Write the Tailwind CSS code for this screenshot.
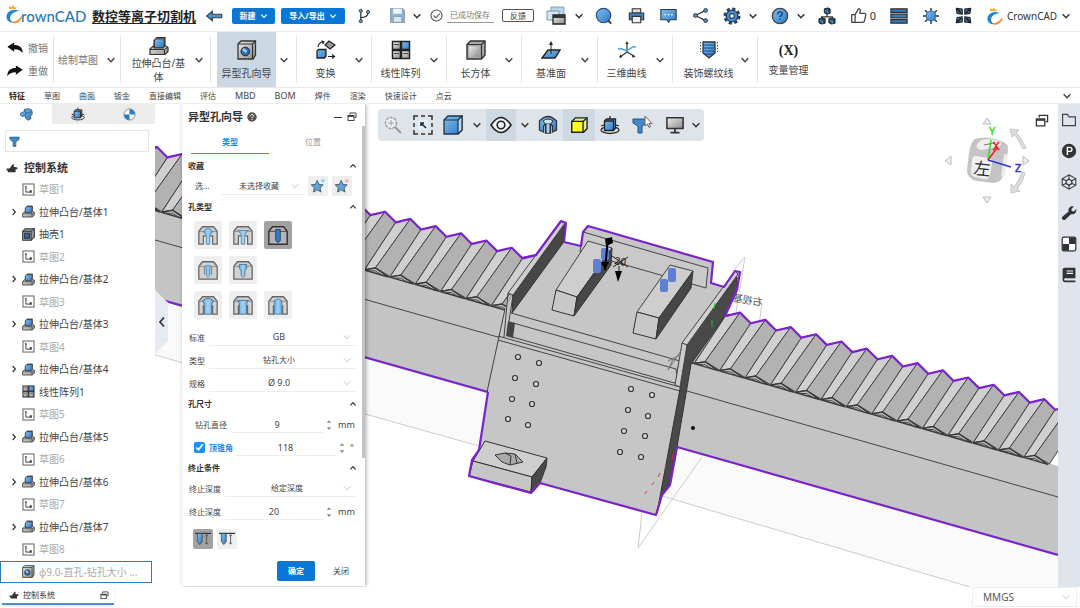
<!DOCTYPE html>
<html lang="zh-CN">
<head>
    <meta charset="utf-8"/>
    <meta content="width=device-width, initial-scale=1.0" name="viewport"/>
    <title>CrownCAD</title>
    <script src="https://cdn.jsdelivr.net/npm/@tailwindcss/browser@4"></script>
</head>
<body class="h-screen flex flex-col overflow-hidden bg-white text-[#444] text-[10px] leading-[14px] font-['Noto_Sans','Noto_Sans_CJK_SC',sans-serif]">
    <!-- Icon symbols -->
    <svg class="absolute w-0 h-0" aria-hidden="true">
        <defs>
            <linearGradient id="blue" x1="0" y1="0" x2="1" y2="1"><stop offset="0" stop-color="#7fc0f2"/><stop offset="1" stop-color="#2f78c4"/></linearGradient>
            <linearGradient id="pale" x1="0" y1="0" x2="1" y2="0"><stop offset="0" stop-color="#5fa6dc"/><stop offset="0.5" stop-color="#a6d3f3"/><stop offset="1" stop-color="#5fa6dc"/></linearGradient>
            <linearGradient id="gray" x1="0" y1="0" x2="1" y2="1"><stop offset="0" stop-color="#eee"/><stop offset="1" stop-color="#8a8a8a"/></linearGradient>
        </defs>
        <symbol id="chev" viewBox="0 0 12 12"><path d="M2 4l4 4 4-4" fill="none" stroke="currentColor" stroke-width="1.800"/></symbol>
        <symbol id="chev-up" viewBox="0 0 12 12"><path d="M2 8l4-4 4 4" fill="none" stroke="currentColor" stroke-width="1.800"/></symbol>
        <symbol id="chev-right" viewBox="0 0 12 12"><path d="M4 1.500l4 4.500-4 4.500" fill="none" stroke="currentColor" stroke-width="1.800"/></symbol>
        <symbol id="chev-thin" viewBox="0 0 12 12"><path d="M1 3.500l5 5 5-5" fill="none" stroke="#bbb" stroke-width="1.300"/></symbol>
        <symbol id="spin" viewBox="0 0 8 16"><path d="M1 5l3-3.500 3 3.500zM1 11l3 3.500 3-3.500z" fill="#888"/></symbol>
        <symbol id="crown" viewBox="1 0 18 20">
            <path d="M15 6.500C8 3.500 1.500 7.500 1.500 13c0 4 3.500 6.800 7.500 6C6 17.500 4.500 15 5.800 12c1-2.700 4.200-4.700 9.200-5.500z" fill="#1b86d3"/>
            <path d="M18 12.500c-1 5-6 8-10.500 6.300 4.500 0 7.500-2.500 10.500-6.300z" fill="#f08a1c" stroke="#f08a1c"/>
            <path d="M4 5L4.500 1.500 7 3l1.500-2.500L10 3l2.500-.5L11 5C8.500 4 6.500 4.200 4 5z" fill="#f5a623"/>
        </symbol>
        <symbol id="back" viewBox="0 0 20 14"><path d="M1.500 7L8 1.500V5h11v4H8v3.500z" fill="#4d92cf" stroke="#33404d" stroke-width="1.300"/></symbol>
        <symbol id="branch" viewBox="0 0 20 20"><path d="M6 4v13M6 12c7 0 9-2 9-6" fill="none" stroke="#333" stroke-width="1.600"/><g fill="#5a9ad4" stroke="#333"><circle cx="6" cy="3.500" r="2"/><circle cx="6" cy="16.500" r="2"/><circle cx="15" cy="5" r="2"/></g></symbol>
        <symbol id="save" viewBox="0 0 20 20"><path d="M2 2h14l2 2v14H2z" fill="#8fb8d8" stroke="#8293a2" stroke-width="1.300"/><path d="M5 2h10v6H5z" fill="#eef4f8"/><path d="M5 11h10v7H5z" fill="#dbe8f1" stroke="#8293a2"/></symbol>
        <symbol id="check" viewBox="0 0 20 20"><circle cx="10" cy="10" r="8.500" fill="none" stroke="#555" stroke-width="1.700"/><path d="M5.500 10l3.500 3.500 6-6.500" fill="none" stroke="#555" stroke-width="1.700"/></symbol>
        <symbol id="windows" viewBox="0 0 20 20"><path d="M5 1h13v10H5z" fill="#bcd3e4" stroke="#8ba0b0"/><path d="M1 5h12v9H1z" fill="#d5e6f2" stroke="#7f95a5"/><path d="M7 9h12v9H7z" fill="url(#gray)" stroke="#222" stroke-width="1.300"/><path d="M7 9h12v3H7z" fill="#333"/></symbol>
        <symbol id="search" viewBox="0 0 20 20"><circle cx="9.500" cy="9.500" r="8" fill="url(#blue)" stroke="#2c4a6b" stroke-width="1.300"/><path d="M14.500 15l3.500 3.500" stroke="#333" stroke-width="2"/></symbol>
        <symbol id="print" viewBox="0 0 20 20"><path d="M5 2h10v5H5z" fill="#ddd" stroke="#333" stroke-width="1.300"/><path d="M1.500 7h17v8h-17z" fill="#3f83c6" stroke="#333" stroke-width="1.300"/><path d="M5 11h10v7.500H5z" fill="#eee" stroke="#333" stroke-width="1.300"/></symbol>
        <symbol id="chat" viewBox="0 0 20 20"><path d="M1 3h18v12h-7l-2 3-2-3H1z" fill="url(#blue)" stroke="#2b3b4b" stroke-width="1.300"/><path d="M5 9h2m2 0h2m2 0h2" stroke="#fff" stroke-width="1.500"/></symbol>
        <symbol id="share" viewBox="0 0 20 20"><path d="M4 10l12-6M4 10l12 6" stroke="#333" stroke-width="1.500"/><g fill="#4a8cc8" stroke="#333"><circle cx="4" cy="10" r="2.300"/><circle cx="16" cy="4" r="2.300"/><circle cx="16" cy="16" r="2.300"/></g></symbol>
        <symbol id="gear" viewBox="0 0 20 20"><circle cx="10" cy="10" r="8" fill="none" stroke="#26435f" stroke-width="3" stroke-dasharray="3.600 2.680"/><circle cx="10" cy="10" r="6.500" fill="#4b8fcf" stroke="#26435f" stroke-width="1.500"/><circle cx="10" cy="10" r="2.600" fill="#fff" stroke="#26435f" stroke-width="1.300"/></symbol>
        <symbol id="help" viewBox="0 0 20 20"><circle cx="10" cy="10" r="8.500" fill="url(#blue)" stroke="#444" stroke-width="1.500"/><path d="M7.500 8c0-3.500 5-3.300 5-.5 0 1.800-2.500 1.800-2.500 4M10 13v1.500" fill="none" stroke="#1d3f66" stroke-width="1.500"/></symbol>
        <symbol id="org" viewBox="0 0 20 20"><path d="M10 6v5M4 14v-3h12v3" fill="none" stroke="#333" stroke-width="1.300"/><path d="M7 2l4-1 2.500 1v5L10 8 7 6.500zM1 13l4-1 3 1v5l-4 1-3-1.500zM12 13l4-1 3 1v5l-4 1-3-1.500z" fill="#24496f" stroke="#222"/><path d="M8 4l3 1v2M2 15l3 1v2M13 15l3 1v2" fill="none" stroke="#6fb1e8"/></symbol>
        <symbol id="thumb" viewBox="0 0 20 20"><path d="M2 9h4v9H2zM6 9l4-7c2.500 0 2.500 2 1.500 5.500H17c1.500 0 1.800 1.200 1.500 2.500l-1.500 6.500c-.3 1-1 1.500-2 1.500H6" fill="none" stroke="#444" stroke-width="1.500" stroke-linejoin="round"/></symbol>
        <symbol id="list" viewBox="0 0 20 20"><path d="M1 2h18v4H1zM1 8h18v4H1zM1 14h18v4H1z" fill="#3f79ad" stroke="#2a2f36" stroke-width="1.300"/></symbol>
        <symbol id="sun" viewBox="0 0 20 20"><path d="M10 1v18M1 10h18M3.500 3.500l13 13M16.500 3.500l-13 13" stroke="#333" stroke-width="1.600"/><circle cx="10" cy="10" r="5.500" fill="url(#blue)" stroke="#2d5f94"/></symbol>
        <symbol id="compress" viewBox="0 0 20 20"><path d="M1.500 1.500l7 1v6l-6-1zM18.500 1.500l-7 1v6l6-1zM1.500 18.500l7-1v-6l-6 1zM18.500 18.500l-7-1v-6l6 1z" fill="#3c7dbd" stroke="#222" stroke-width="1.400" stroke-linejoin="round"/><path d="M2 2l5 5M18 2l-5 5M2 18l5-5M18 18l-5-5" stroke="#222" stroke-width="2"/></symbol>
        <symbol id="undo" viewBox="0 0 20 14"><path d="M1 5.500L9 .5v3c6 0 10 3 10 9.500-2-3-5-4.500-10-4.500v3z" fill="#111"/></symbol>
        <symbol id="extrude" viewBox="0 0 20 20"><path d="M1 13l4-3.500h11l3 2v4L16 18.500H1z" fill="url(#gray)" stroke="#333" stroke-width="1.200"/><path d="M1 13.500h14.500L19 11M15.500 13.500v5" fill="none" stroke="#333"/><path d="M5 12V4.500L8 1.500h8V9l-2 3z" fill="#555" stroke="#333" stroke-width="1.200"/><path d="M6 3.500h8.500V11H6z" fill="url(#blue)"/></symbol>
        <symbol id="wizard" viewBox="0 0 20 20"><path d="M1 4l3-3h14.500v14L16 19H1z" fill="url(#gray)" stroke="#333" stroke-width="1.300"/><path d="M1 4h14.500v15M15.500 4l3-3" fill="none" stroke="#333" stroke-width="1.200"/><circle cx="8.300" cy="11.500" r="4.300" fill="#2b6cb3" stroke="#222"/><path d="M6 9l3.500 3" stroke="#a7d3f5" stroke-width="2.500"/></symbol>
        <symbol id="transform" viewBox="0 0 20 20"><path d="M9 5l4-4 6 4-5 4z" fill="#999" stroke="#222" stroke-width="1.300"/><path d="M1 11l1.500-1.500H10V16l-1.500 2H1z" fill="url(#blue)" stroke="#222" stroke-width="1.300"/><path d="M2 7c.5-3 2-5 5-5M5.500.8L8 2 6.500 4M12 16.500h6M16 14.500l2.500 2-2.500 2" fill="none" stroke="#222" stroke-width="1.200"/></symbol>
        <symbol id="pattern" viewBox="0 0 20 20"><g stroke="#222" stroke-width="1.500"><rect x="1.500" y="1.500" width="8" height="8" fill="url(#gray)"/><rect x="10.500" y="1.500" width="8" height="8" fill="url(#blue)"/><rect x="1.500" y="10.500" width="8" height="8" fill="url(#gray)"/><rect x="10.500" y="10.500" width="8" height="8" fill="url(#gray)"/></g><path d="M3 4.500h5M3 13.500h5M12 13.500h5" stroke="#444"/></symbol>
        <symbol id="box" viewBox="0 0 20 20"><path d="M1 4.500L4.500 1H19v14l-3.500 4H1z" fill="#aaa" stroke="#333" stroke-width="1.400"/><path d="M3 6.500h10.500v10.500H3z" fill="url(#gray)"/><path d="M1 4.500h14.500V19M15.500 4.500L19 1" fill="none" stroke="#333" stroke-width="1.200"/></symbol>
        <symbol id="plane" viewBox="0 0 20 20"><path d="M1 18l6-8h12l-5 8z" fill="url(#blue)" stroke="#222" stroke-width="1.400"/><path d="M10 14V4" stroke="#222"/><path d="M8 5l2-4 2 4z" fill="#222"/></symbol>
        <symbol id="curve" viewBox="0 0 20 20"><path d="M10 12V3M10 12l-7 5M10 12l7 4" stroke="#333" stroke-width="1.200"/><path d="M8.500 4L10 1l1.500 3zM2 18l1.500-3.500L5.500 17zM18.500 17l-3.500.5 1-3z" fill="#222"/><path d="M1 9c4-2 6 3 10 1s4-4 8-3" fill="none" stroke="#4fa8e8" stroke-width="1.600"/></symbol>
        <symbol id="thread" viewBox="0 0 20 20"><path d="M4 2h12v11l-6 5-6-5z" fill="url(#blue)" stroke="#333" stroke-width="1.300"/><path d="M4 5h12M4 8h12M4 11h12M5 14h10" stroke="#1d4d80"/><path d="M1.500 2v10M18.500 2v10" stroke="#555" stroke-dasharray="1.500 1.500"/></symbol>
        <symbol id="part" viewBox="0 0 20 20"><path d="M1 8l5-2 1-4 6-1 5 2 1 6-3 4 1 3-4 3-4-3-1-4-5 1-2-2z" fill="url(#blue)" stroke="#33577a" stroke-width="1.300" stroke-linejoin="round"/><path d="M7 3l2 5-1 4M9 8l8-2" fill="none" stroke="#244f7c"/></symbol>
        <symbol id="section" viewBox="0 0 20 20"><ellipse cx="10" cy="15" rx="9" ry="3.500" fill="#ddd" stroke="#333" stroke-width="1.300"/><path d="M4.500 6l2-2h9v9l-2 2.500h-9z" fill="url(#blue)" stroke="#222" stroke-width="1.300"/><path d="M4.500 6h9v9M10 4V1M1 11l3-1M16 10l3 1" fill="none" stroke="#222" stroke-width="1.300"/></symbol>
        <symbol id="ball" viewBox="0 0 20 20"><circle cx="10" cy="10" r="8.500" fill="#fff" stroke="#555"/><path d="M10 10V1.500A8.500 8.500 0 0 1 18.500 10zM10 10v8.500A8.500 8.500 0 0 1 1.500 10z" fill="#2b7cc4"/></symbol>
        <symbol id="filter" viewBox="0 0 20 20"><path d="M1.500 2h17v4L12.500 11v8h-5v-8l-6-5z" fill="#3f86c8" stroke="#33577a" stroke-width="1.200"/></symbol>
        <symbol id="root" viewBox="0 0 20 16"><path d="M1 9h5l4-6 3-2v5l6 1v3h-3v5H3v-3H1z" fill="#333"/></symbol>
        <symbol id="sketch" viewBox="0 0 20 20"><rect x="1.500" y="1.500" width="17" height="17" fill="#fff" stroke="#666" stroke-width="1.600"/><path d="M6 6v8h7" fill="none" stroke="#444" stroke-width="1.500"/><path d="M4 5h3v3M12 11h3v4h-3z" fill="#333"/></symbol>
        <symbol id="shell" viewBox="0 0 20 20"><path d="M1 5l4-4h14v13l-5 5H1z" fill="#999" stroke="#333" stroke-width="1.600"/><path d="M1 5h13v14M14 5l5-4" fill="none" stroke="#333" stroke-width="1.500"/><path d="M4 8h7.500v8H4z" fill="#2d68a5" stroke="#222" stroke-width="1.200"/></symbol>
        <symbol id="restore" viewBox="0 0 20 20"><path d="M6 5V2h12v9h-3" fill="none" stroke="currentColor" stroke-width="1.800"/><rect x="2" y="7" width="12" height="10" fill="none" stroke="currentColor" stroke-width="1.800"/><path d="M2 8.500h12" stroke="currentColor" stroke-width="2.500"/></symbol>
        <symbol id="star" viewBox="0 0 20 20"><path d="M9 3l2.300 5 5.200.6-3.900 3.600 1.100 5.300L9 14.800l-4.700 2.700 1.100-5.300L1.500 8.600 6.700 8z" fill="#5fa4dc" stroke="#4b5a68" stroke-width="1.200"/></symbol>
        <symbol id="block" viewBox="0 0 24 24"><path d="M2 22V8l4-5h12l4 5v14z" fill="#d2d2d2" stroke="#666" stroke-width="1.400"/><path d="M2 8h20" stroke="#888"/></symbol>
        <symbol id="open-block" viewBox="0 0 24 24"><path d="M2 22V8l4-5h12l4 5v14h-5v-9H7v9z" fill="#d2d2d2" stroke="#666" stroke-width="1.400"/><path d="M2 8h20" stroke="#888"/></symbol>
        <symbol id="depth" viewBox="0 0 20 20"><path d="M0 3h20" stroke="#333" stroke-width="1.500"/><path d="M3 3h6v10l-3 4-3-4z" fill="url(#blue)" stroke="#444"/><path d="M14.500 5v11M13 6.500l1.500-2 1.500 2M13 14.500l1.500 2 1.500-2" fill="none" stroke="#444"/></symbol>
    </svg>

    <!-- Top bar -->
    <header class="h-8 shrink-0 flex items-center border-b border-[#eee] text-[#333]">
        <a href="#" class="flex items-center w-[92px] pl-[6px] text-[#2a78b8] text-[15px] font-medium font-['Lato','Noto_Sans',sans-serif]" aria-label="CrownCAD">
            <svg class="w-[17px] h-5 -mr-[2px] mb-1"><use href="#crown"/></svg><span>rownCAD</span>
        </a>
        <h1 class="w-[108px] text-[13px] leading-4 font-bold text-[#222] underline underline-offset-2 whitespace-nowrap">数控等离子切割机</h1>
        <button class="w-8 flex justify-center pr-1"><svg class="w-[18px] h-3"><use href="#back"/></svg></button>
        <button class="h-4 w-[43px] rounded-[2px] bg-[#0878d4] text-white text-[8px] font-bold flex items-center justify-center gap-1">新建<svg class="w-2 h-2"><use href="#chev"/></svg></button>
        <button class="ml-[6px] h-4 w-16 rounded-[2px] bg-[#0878d4] text-white text-[8px] font-bold flex items-center justify-center gap-1">导入/导出<svg class="w-2 h-2"><use href="#chev"/></svg></button>
        <button class="w-[38px] flex justify-center"><svg class="w-4 h-4"><use href="#branch"/></svg></button>
        <button class="w-7 flex justify-center"><svg class="w-[17px] h-[17px]"><use href="#save"/></svg></button>
        <button class="w-3 flex justify-center"><svg class="w-[10px] h-[10px]"><use href="#chev"/></svg></button>
        <div class="ml-[7px] flex items-center gap-1"><svg class="w-[13px] h-[13px]"><use href="#check"/></svg><span class="w-[47px] pl-[3px] text-[8px] border-b border-[#999] text-[#777] whitespace-nowrap">已成功保存</span></div>
        <button class="ml-2 w-8 h-[13px] border border-[#555] rounded-[2px] text-[8px] leading-[10px]">反馈</button>
        <button class="ml-3 flex"><svg class="w-5 h-5"><use href="#windows"/></svg></button>
        <button class="ml-2 flex"><svg class="w-[10px] h-[10px]"><use href="#chev"/></svg></button>
        <div class="ml-auto flex items-center">
            <button class="w-8 flex justify-center"><svg class="w-[18px] h-[18px]"><use href="#search"/></svg></button>
            <button class="w-8 flex justify-center"><svg class="w-[17px] h-[17px]"><use href="#print"/></svg></button>
            <button class="w-8 flex justify-center"><svg class="w-[17px] h-[17px]"><use href="#chat"/></svg></button>
            <button class="w-8 flex justify-center"><svg class="w-[17px] h-[17px]"><use href="#share"/></svg></button>
            <button class="w-8 flex justify-center"><svg class="w-[18px] h-[18px]"><use href="#gear"/></svg></button>
            <button class="w-4 flex"><svg class="w-[10px] h-[10px]"><use href="#chev"/></svg></button>
            <button class="w-8 flex justify-center"><svg class="w-[18px] h-[18px]"><use href="#help"/></svg></button>
            <button class="w-[15px] flex"><svg class="w-[10px] h-[10px]"><use href="#chev"/></svg></button>
            <button class="w-8 flex justify-center"><svg class="w-[18px] h-[18px]"><use href="#org"/></svg></button>
            <button class="w-10 flex items-center justify-center gap-[3px] text-[11px]"><svg class="w-[17px] h-[17px]"><use href="#thumb"/></svg>0</button>
            <button class="w-8 flex justify-center"><svg class="w-[18px] h-[18px]"><use href="#list"/></svg></button>
            <button class="w-8 flex justify-center"><svg class="w-[18px] h-[18px]"><use href="#sun"/></svg></button>
            <button class="w-8 flex justify-center"><svg class="w-[17px] h-[17px]"><use href="#compress"/></svg></button>
            <button class="w-[101px] pl-2 flex items-center"><svg class="w-4 h-[18px] mr-1"><use href="#crown"/></svg>CrownCAD<svg class="w-[10px] h-[10px] ml-1"><use href="#chev"/></svg></button>
        </div>
    </header>

    <!-- Ribbon -->
    <nav class="h-14 shrink-0 flex border-b border-[#e8e8e8] text-center">
        <div class="w-[54px] my-1 border-r border-[#e5e5e5] flex flex-col justify-around text-[#777]">
            <button class="flex items-center gap-1 pl-[6px] whitespace-nowrap"><svg class="w-[18px] h-3 shrink-0"><use href="#undo"/></svg>撤销</button>
            <button class="flex items-center gap-1 pl-[6px] whitespace-nowrap"><svg class="w-[18px] h-3 shrink-0 -scale-x-100"><use href="#undo"/></svg>重做</button>
        </div>
        <div class="w-[67px] my-1 border-r border-[#e5e5e5] flex items-center justify-center gap-2">
            <button class="text-[#777]">绘制草图</button><button><svg class="w-[10px] h-[10px]"><use href="#chev"/></svg></button>
        </div>
        <div class="w-[90px] my-1 border-r border-[#e5e5e5] flex items-center justify-center gap-1">
            <button class="w-[62px] flex flex-col items-center"><svg class="w-5 h-5"><use href="#extrude"/></svg>拉伸凸台/基体</button><button><svg class="w-[10px] h-[10px]"><use href="#chev"/></svg></button>
        </div>
        <div class="w-[85px] flex items-center pl-[6px] gap-[3px]">
            <button class="w-[59px] h-full bg-[#cbd8e3] flex flex-col items-center justify-center gap-[6px]"><svg class="w-5 h-5"><use href="#wizard"/></svg>异型孔向导</button><button><svg class="w-[10px] h-[10px]"><use href="#chev"/></svg></button>
        </div>
        <div class="w-[76px] my-1 border-x border-[#e5e5e5] flex items-center">
            <button class="flex-1 flex flex-col items-center gap-[6px]"><svg class="w-5 h-5"><use href="#transform"/></svg>变换</button><button class="w-[17px]"><svg class="w-[10px] h-[10px]"><use href="#chev"/></svg></button>
        </div>
        <div class="w-[75px] my-1 border-r border-[#e5e5e5] flex items-center">
            <button class="flex-1 flex flex-col items-center gap-[6px]"><svg class="w-5 h-5"><use href="#pattern"/></svg>线性阵列</button><button class="w-[17px]"><svg class="w-[10px] h-[10px]"><use href="#chev"/></svg></button>
        </div>
        <div class="w-[75px] my-1 border-r border-[#e5e5e5] flex items-center">
            <button class="flex-1 flex flex-col items-center gap-[6px]"><svg class="w-5 h-5"><use href="#box"/></svg>长方体</button><button class="w-[17px]"><svg class="w-[10px] h-[10px]"><use href="#chev"/></svg></button>
        </div>
        <div class="w-[76px] my-1 border-r border-[#e5e5e5] flex items-center">
            <button class="flex-1 flex flex-col items-center gap-[6px]"><svg class="w-5 h-5"><use href="#plane"/></svg>基准面</button><button class="w-[17px]"><svg class="w-[10px] h-[10px]"><use href="#chev"/></svg></button>
        </div>
        <div class="w-[75px] my-1 border-r border-[#e5e5e5] flex items-center">
            <button class="flex-1 flex flex-col items-center gap-[6px]"><svg class="w-5 h-5"><use href="#curve"/></svg>三维曲线</button><button class="w-[17px]"><svg class="w-[10px] h-[10px]"><use href="#chev"/></svg></button>
        </div>
        <div class="w-[85px] my-1 border-r border-[#e5e5e5] flex items-center">
            <button class="flex-1 flex flex-col items-center gap-[6px] pl-1"><svg class="w-5 h-5"><use href="#thread"/></svg>装饰螺纹线</button><button class="w-[17px]"><svg class="w-[10px] h-[10px]"><use href="#chev"/></svg></button>
        </div>
        <button class="w-[61px] flex flex-col items-center justify-center gap-1"><span class="text-sm leading-4 font-bold text-[#222] font-['Liberation_Serif',serif]">(X)</span>变量管理</button>
    </nav>
    <nav class="h-4 shrink-0 flex items-center pl-[9px] gap-[19px] text-[8px] border-b border-[#eee] whitespace-nowrap">
        <a href="#" class="font-bold text-[#222]">特征</a><a href="#">草图</a><a href="#">曲面</a><a href="#">钣金</a><a href="#">直接编辑</a><a href="#">评估</a><a href="#" class="text-[9px]">MBD</a><a href="#" class="text-[9px]">BOM</a><a href="#">焊件</a><a href="#">渲染</a><a href="#">快速设计</a><a href="#">点云</a>
        <button class="ml-auto mr-2"><svg class="w-[10px] h-[10px]"><use href="#chev"/></svg></button>
    </nav>

    <main class="flex-1 min-h-0 flex">
        <!-- Feature tree -->
        <aside class="w-[155px] shrink-0 flex flex-col bg-white">
            <div class="h-5 flex bg-[#ececec]">
                <button class="w-[52px] bg-white flex items-center justify-center"><svg class="w-[13px] h-[13px]"><use href="#part"/></svg></button>
                <button class="flex-1 flex items-center justify-center"><svg class="w-[14px] h-[14px]"><use href="#section"/></svg></button>
                <button class="flex-1 flex items-center justify-center"><svg class="w-[13px] h-[13px]"><use href="#ball"/></svg></button>
            </div>
            <label class="mt-[6px] ml-[5px] mr-[6px] h-[22px] border border-[#e6e6e6] flex items-center pl-[3px]">
                <svg class="w-[11px] h-[11px] shrink-0"><use href="#filter"/></svg><input type="text" aria-label="筛选" class="flex-1 min-w-0 px-1 outline-none"/>
            </label>
            <div class="mt-[6px] h-5 flex items-center gap-[6px] pl-[6px] text-[11px] font-bold text-[#333]"><svg class="w-3 h-[10px]"><use href="#root"/></svg>控制系统</div>
            <ul id="tree" class="flex-1 flex flex-col mb-1"></ul>
        </aside>

        <!-- Viewport -->
        <section class="flex-1 min-w-0 relative overflow-hidden bg-white">
            <svg class="absolute inset-0 w-full h-full" viewBox="155 104 903 483" preserveAspectRatio="xMinYMin slice" stroke-linejoin="round">
                <!-- reference planes -->
                <path d="M155 300l332 92-8 54-324-91zM677 447l381 108v32h-88l-308-91z" fill="#fafafa"/>
                <path d="M155 355l324 91M662 496l308 91M702 457l-64 91 4-35M745 257l-12 14M745 257l-9 55M762 303l-3 22" fill="none" stroke="#ccc"/>
                <!-- rack -->
                <path d="M155 208l903 258v89L155 299z" fill="#c4c4c4"/>
                <g id="teeth"></g>
                <path d="M155 240l350 99M687 391l371 106" stroke="#444"/>
                <path d="M155 298l333 94M677 447l381 108" stroke="#7a22cc" stroke-width="2.200"/>
                <!-- carriage body -->
                <path d="M536 255L561 221l5 2-2 19 17 4 2-14 5-6 125 36-2 21 13 4 11-16 5 1-3 18-12 26-34 48-14 84-7 38-8 10-6 20-116-32-9 10-62-17 3-16 7-10 9-58 17-84z" fill="#c6c6c6"/>
                <path d="M565 224l-2 19-51 70 1-18z" fill="#474747" stroke="#333"/>
                <path d="M561 221l-53 72 5 2 52-72z" fill="#d0d0d0" stroke="#444"/>
                <path d="M508 293l-4 44M513 295l-4 26" fill="none" stroke="#444"/>
                <path d="M583 232l125 36-2 20-126-36z" fill="#c9c9c9" stroke="#444"/>
                <path d="M508 321l7 2-2 15-7-2z" fill="#444"/>
                <path d="M511 313l169 48-3 9M513 323l163 46 2 18M509 336l169 48M498 336l182 51M498 340l182 51M505 309l-18 83" fill="none" stroke="#444"/>
                <path d="M737 277v13l-12 26-34 48-14 83-7 38-8 10-5 18 23-124 7-46z" fill="#494949" stroke="#333"/>
                <path d="M735 271l-53 72 5 2 51-71z" fill="#d0d0d0" stroke="#444"/>
                <path d="M682 343l5 2-7 42-5-2z" fill="#ccc" stroke="#444"/>
                <path d="M682 349l-14 21 5-11M668 361l12-6" fill="none" stroke="#777"/>
                <!-- mounting blocks -->
                <path d="M588 241l24 7-35 49-21-7z" fill="#cecece" stroke="#444"/>
                <path d="M556 290l21 7-3 19-22-6z" fill="#c8c8c8" stroke="#333"/>
                <path d="M612 248l-1 17-37 51 3-19z" fill="#474747" stroke="#333"/>
                <path d="M670 265l23 6-34 47-22-6z" fill="#cecece" stroke="#444"/>
                <path d="M637 312l22 6-3 21-23-6z" fill="#c8c8c8" stroke="#333"/>
                <path d="M693 271l-2 17-35 51 3-21z" fill="#474747" stroke="#333"/>
                <g fill="#5f7fd3"><rect x="601" y="248" width="8" height="12" rx="2"/><rect x="593" y="259" width="8" height="14" rx="2"/><rect x="668" y="268" width="8" height="14" rx="2"/><rect x="660" y="279" width="8" height="13" rx="2"/></g>
                <path d="M608 238l-3 32" stroke="#000" stroke-width="2"/><path d="M605 239l7-2 1 6-7 3zM601 262h8l-4 8zM615 271h7l-4 11z" fill="#000"/>
                <path d="M619 266v8M612 256l16 11M613 267l15-10" stroke="#222"/>
                <text x="614" y="264" font-size="10" fill="#111" transform="rotate(10 614 264)">20</text>
                <text transform="translate(762 306) rotate(9) scale(-1 1)" font-size="10" fill="#555" font-family="Noto Sans CJK SC">右视基</text>
                <!-- foot -->
                <path d="M485 441l62 17-15 19-59-16z" fill="#cecece" stroke="#333"/>
                <path d="M473 461l59 16-1 15-62-16z" fill="#c6c6c6" stroke="#333"/>
                <path d="M547 458l-1 9-6 16-9 9 1-15z" fill="#484848" stroke="#333"/>
                <path d="M495 455l10-2 10 1 8 8-13 3-8-3z" fill="#aaa" stroke="#333"/><path d="M505 453l6 3-1 9M515 454l2 9" stroke="#333" fill="none"/>
                <g id="holes" fill="#d8d8d8" stroke="#333" stroke-width="1.200"></g>
                <!-- selection outline -->
                <path d="M522 258l14-3 25-34 5 2-2 19 17 4 2-14 5-6 125 36-2 21 13 4 11-16 5 1-3 18-12 26 5-1M677 447l-7 38-8 10-6 20-116-32-9 10-62-17 3-16 7-10 9-58" fill="none" stroke="#7a22cc" stroke-width="2.200"/>
                <circle cx="693" cy="428" r="2" fill="#111"/>
                <path d="M715 303l-1 6M712 320v7" stroke="#1ec81e"/>
                <path d="M673 455l-1 4M666 464l-1 4M660 473l-2 4M654 482l-2 3M647 491l-2 3" stroke="#e33"/>
                <!-- view cube -->
                <path d="M975 139q12-4 26 2 8 2 7 10l-5 25q-2 7-10 7l-16-2q-10-2-10-11l2-17q2-12 6-14z" fill="#c4c4c4"/>
                <path d="M981 140q9-2 18 1 5 3-1 6l-17 3q-6-1-4-6z" fill="#eee"/>
                <path d="M976 156l13 2q4 1 3 5l-2 12q-1 5-6 4l-9-2q-4-1-4-5l1-12q0-4 4-4z" fill="#f1f1f1"/>
                <path d="M1004 154l4 1-3 19-4 3z" fill="#eee"/>
                <text x="973" y="174" font-size="17" fill="#333" transform="rotate(6 973 174)" font-family="Noto Sans CJK SC">左</text>
                <path d="M984 145l10-2" stroke="#777"/>
                <path d="M988 160l3-20" stroke="#2be02b" stroke-width="1.500"/><path d="M988 160l9-12" stroke="#e22" stroke-width="1.500"/><path d="M988 160l23 7" stroke="#33d" stroke-width="1.500"/>
                <g font-size="11"><text x="989" y="135" fill="#2be02b" stroke="#2be02b" stroke-width=".5">Y</text><text x="993" y="150" fill="#e22" stroke="#e22" stroke-width=".5">X</text><text x="1015" y="172" fill="#33d" stroke="#33d" stroke-width=".5">Z</text></g>
                <path d="M983 124l4-6 4 6zM983 197l4 6 4-6zM951 156l-6 5 6 4zM1023 156l6 5-6 4z" fill="#eee" stroke="#bbb"/>
                <path d="M1010 129l9 1-3 2q6 7 10 16l-3 1q-4-9-9-15l-2 3zM1011 193l9-2-3-2q6-7 8-16l-3-1q-3 9-8 15l-3-3z" fill="#ddd" stroke="#bbb" stroke-width=".8"/>
            </svg>

            <button class="absolute left-0 top-[186px] w-[13px] h-[64px] bg-[#e6eaf1] [clip-path:polygon(0_0,100%_20%,100%_80%,0_100%)] flex items-center justify-center text-[#333]" aria-label="收起"><svg class="w-3 h-3 rotate-180"><use href="#chev-right"/></svg></button>
            <button class="absolute right-[9px] top-[10px] text-[#333]"><svg class="w-[14px] h-[14px]"><use href="#restore"/></svg></button>

            <!-- View toolbar -->
            <div class="absolute left-[223px] top-[5px] h-8 w-[326px] flex rounded bg-[#dfe4eb] text-[#333]">
                <button class="w-[30px] flex items-center justify-center"><svg class="w-5 h-5" viewBox="0 0 20 20"><circle cx="8" cy="8" r="5.500" fill="#eee" stroke="#999" stroke-width="1.300" stroke-dasharray="3 1"/><path d="M12 12l6 6" stroke="#999" stroke-width="2"/><path d="M8 5v6M5 8h6" stroke="#8ab"/></svg></button>
                <button class="w-[30px] flex items-center justify-center"><svg class="w-5 h-5" viewBox="0 0 20 20"><path d="M1 5V1h4M15 1h4v4M19 15v4h-4M5 19H1v-4M8 1h4M8 19h4M1 8v4M19 8v4" fill="none" stroke="#333" stroke-width="1.500"/><path d="M5 5h10v10H5z" fill="#dff0fa"/><path d="M8 8l5 5M8 11V8h3" fill="none" stroke="#222" stroke-width="1.500"/></svg></button>
                <button class="w-[30px] flex items-center justify-center"><svg class="w-5 h-5" viewBox="0 0 20 20"><path d="M1 5l4-4h14v14l-4 4H1z" fill="url(#blue)" stroke="#234" stroke-width="1.300"/><path d="M15 5l4-4v14l-4 4z" fill="#b9d9f2"/><path d="M1 5h14v14M15 5l4-4v14l-4 4" fill="none" stroke="#234" stroke-width="1.200"/></svg></button>
                <button class="w-[18px] flex items-center justify-center"><svg class="w-[10px] h-[10px]"><use href="#chev"/></svg></button>
                <button class="w-[30px] flex items-center justify-center bg-[#cdd8e2]"><svg class="w-[22px] h-5" viewBox="0 0 22 20"><path d="M1 10q10-15 20 0-10 15-20 0z" fill="#eef2f5" stroke="#222" stroke-width="1.600"/><circle cx="11" cy="10" r="3.800" fill="none" stroke="#222" stroke-width="1.600"/></svg></button>
                <button class="w-[17px] flex items-center justify-center"><svg class="w-[10px] h-[10px]"><use href="#chev"/></svg></button>
                <button class="w-[30px] flex items-center justify-center"><svg class="w-5 h-5" viewBox="0 0 20 20"><path d="M1.500 6q8.500-9 17 0v9l-4 2v-6l-2-2v9h-5V9l-2 2v6l-4-2z" fill="url(#blue)" stroke="#333" stroke-width="1.300"/><path d="M5 6q5-4 10 0l-2.500 3h-5z" fill="#cfe3f4" stroke="#333"/><path d="M10 9v9" stroke="#cfe3f4" stroke-width="1.500"/></svg></button>
                <button class="w-[32px] flex items-center justify-center bg-[#cdd8e2]"><svg class="w-[18px] h-[18px]" viewBox="0 0 20 20"><path d="M2 6l4-4h13v12l-4 4H2z" fill="#e8e89a" stroke="#222" stroke-width="1.500"/><path d="M2 6h12.500v12H2z" fill="#ffff14" stroke="#222" stroke-width="1.500"/><path d="M14.500 6L19 2" stroke="#222" stroke-width="1.500"/></svg></button>
                <button class="w-[30px] flex items-center justify-center"><svg class="w-5 h-5"><use href="#section"/></svg></button>
                <button class="w-[34px] flex items-center justify-center"><svg class="w-[22px] h-5" viewBox="0 0 22 20"><path d="M2 4h14v4l-5 3v7H7v-7L2 8z" fill="#4389c9" stroke="#2c5278"/><path d="M14 1v10l2.500-2 1.500 3.500 1.500-.7-1.500-3.300h3z" fill="#fff" stroke="#666"/></svg></button>
                <button class="w-[32px] flex items-center justify-center"><svg class="w-[18px] h-[18px]" viewBox="0 0 20 20"><path d="M1 2h18v12H1z" fill="url(#gray)" stroke="#333" stroke-width="1.700"/><path d="M10 14v4M5 18.500h10" stroke="#333" stroke-width="2"/></svg></button>
                <button class="flex items-center"><svg class="w-[10px] h-[10px]"><use href="#chev"/></svg></button>
            </div>

            <!-- Hole wizard panel -->
            <form class="absolute left-[27px] top-0 w-[183px] h-[482px] bg-white shadow-[1px_0_4px_rgba(0,0,0,0.35)] text-[8px] pl-[6px] pr-2">
                <div class="absolute right-0 top-[22px] w-[3px] h-[332px] bg-[#c4c4c4]"></div>
                <div class="h-[26px] flex items-center text-[#333]">
                    <h2 class="text-[11px] font-bold">异型孔向导</h2>
                    <svg class="ml-1 w-[10px] h-[10px]" viewBox="0 0 20 20"><circle cx="10" cy="10" r="9.500" fill="#555"/><path d="M7 8c0-4 6-4 6-.5 0 2-3 2-3 4.500M10 13.500V16" fill="none" stroke="#fff" stroke-width="2"/></svg>
                    <button type="button" class="ml-auto mr-[5px] w-2 h-3 flex items-center" aria-label="最小化"><span class="w-full h-px bg-[#333]"></span></button>
                    <button type="button" aria-label="还原"><svg class="w-[10px] h-[10px]"><use href="#restore"/></svg></button>
                </div>
                <div class="h-6 flex text-center">
                    <button type="button" class="w-[78px] ml-[3px] border-b border-[#2d8cf0] text-[#1a85f5] font-bold">类型</button>
                    <button type="button" class="flex-1 text-[#999]">位置</button>
                </div>
                <div class="mt-[2px] h-5 flex items-center justify-between font-bold text-[#333]">收藏<svg class="w-2 h-2"><use href="#chev-up"/></svg></div>
                <div class="h-5 flex items-center pl-[7px]">
                    <label for="fav" class="w-[26px]">选...</label>
                    <span class="relative w-[84px]"><select id="fav" class="appearance-none w-full h-[17px] pr-2 border-b border-[#eee] [text-align-last:center]"><option>未选择收藏</option></select><svg class="absolute right-[6px] top-1 w-2 h-2"><use href="#chev-thin"/></svg></span>
                    <button type="button" class="ml-[3px] w-5 h-5 bg-[#eee] flex items-center justify-center" aria-label="添加收藏"><svg class="w-4 h-4" viewBox="0 0 20 20"><use href="#star"/><path d="M16 1v5M13.500 3.500h5" stroke="#4cc8e8"/></svg></button>
                    <button type="button" class="ml-1 w-5 h-5 bg-[#eee] flex items-center justify-center" aria-label="删除收藏"><svg class="w-4 h-4" viewBox="0 0 20 20"><use href="#star"/><path d="M14 2l4 3M18 2l-4 3" stroke="#e77"/></svg></button>
                </div>
                <div class="mt-px h-5 flex items-center justify-between font-bold text-[#333]">孔类型<svg class="w-2 h-2"><use href="#chev-up"/></svg></div>
                <div class="mt-1 ml-[6px] grid grid-cols-[repeat(3,28px)] gap-[7px]">
                    <button type="button" class="h-7 bg-[#efefef] rounded-[2px] flex items-center justify-center"><svg class="w-[22px] h-[22px]" viewBox="0 0 24 24"><use href="#open-block"/><path d="M7 9q1-4 5-4t5 4l-3 2v11h-4V11z" fill="url(#pale)" stroke="#5f86a5"/></svg></button>
                    <button type="button" class="h-7 bg-[#efefef] rounded-[2px] flex items-center justify-center"><svg class="w-[22px] h-[22px]" viewBox="0 0 24 24"><use href="#open-block"/><path d="M6 7h12l-4 4v11h-4V11z" fill="url(#pale)" stroke="#5f86a5"/></svg></button>
                    <button type="button" class="h-7 bg-[#a2a2a2] rounded-[2px] flex items-center justify-center"><svg class="w-[22px] h-[22px]" viewBox="0 0 24 24"><path d="M2 22V8l4-5h12l4 5v14z" fill="#b5b5b5" stroke="#333" stroke-width="1.600"/><path d="M2 8h20" stroke="#444"/><path d="M9.500 6h5v12L12 20.500 9.500 18z" fill="#2f7cc4" stroke="#224466"/></svg></button>
                    <button type="button" class="h-7 bg-[#efefef] rounded-[2px] flex items-center justify-center"><svg class="w-[22px] h-[22px]" viewBox="0 0 24 24"><use href="#block"/><path d="M8 8v9M16 8v9" stroke="#777"/><path d="M10 7h4v11l-2 2-2-2z" fill="url(#pale)" stroke="#5f96c0"/></svg></button>
                    <button type="button" class="h-7 bg-[#efefef] rounded-[2px] flex items-center justify-center"><svg class="w-[22px] h-[22px]" viewBox="0 0 24 24"><use href="#block"/><path d="M8 6h8v4l-2 3v5l-2 2-2-2v-5l-2-3z" fill="url(#pale)" stroke="#4a7698"/></svg></button>
                    <span></span>
                    <button type="button" class="h-7 bg-[#efefef] rounded-[2px] flex items-center justify-center"><svg class="w-[22px] h-[22px]" viewBox="0 0 24 24"><use href="#open-block"/><path d="M6 7q6-4 12 0l-2 4v11H8V11z" fill="url(#pale)" stroke="#4a6f90"/></svg></button>
                    <button type="button" class="h-7 bg-[#efefef] rounded-[2px] flex items-center justify-center"><svg class="w-[22px] h-[22px]" viewBox="0 0 24 24"><use href="#open-block"/><path d="M6 7h12l-2 3v12H8V10z" fill="url(#pale)" stroke="#4a6f90"/></svg></button>
                    <button type="button" class="h-7 bg-[#efefef] rounded-[2px] flex items-center justify-center"><svg class="w-[22px] h-[22px]" viewBox="0 0 24 24"><use href="#open-block"/><path d="M8 7q4-3 8 0v15H8z" fill="url(#pale)" stroke="#4a86b8"/></svg></button>
                </div>
                <div class="mt-[7px] h-[23px] flex items-center pl-px"><label for="std" class="w-5">标准</label><span class="relative flex-1"><select id="std" class="appearance-none w-full h-[17px] pr-2 border-b border-[#eee] text-[9px] [text-align-last:center]"><option>GB</option></select><svg class="absolute right-[6px] top-1 w-2 h-2"><use href="#chev-thin"/></svg></span></div>
                <div class="h-[23px] flex items-center pl-px"><label for="kind" class="w-5">类型</label><span class="relative flex-1"><select id="kind" class="appearance-none w-full h-[17px] pr-2 border-b border-[#eee] [text-align-last:center]"><option>钻孔大小</option></select><svg class="absolute right-[6px] top-1 w-2 h-2"><use href="#chev-thin"/></svg></span></div>
                <div class="h-[23px] flex items-center pl-px"><label for="size" class="w-5">规格</label><span class="relative flex-1"><select id="size" class="appearance-none w-full h-[17px] pr-2 border-b border-[#eee] text-[9px] [text-align-last:center]"><option>Ø 9.0</option></select><svg class="absolute right-[6px] top-1 w-2 h-2"><use href="#chev-thin"/></svg></span></div>
                <div class="h-[18px] flex items-center justify-between font-bold text-[#333]">孔尺寸<svg class="w-2 h-2"><use href="#chev-up"/></svg></div>
                <div class="h-[23px] flex items-center pl-[7px]"><label for="dia" class="w-9">钻孔直径</label><input id="dia" value="9" class="flex-1 min-w-0 h-[17px] border-b border-[#eee] text-[9px] text-center"/><svg class="w-[6px] h-4 mx-[3px]"><use href="#spin"/></svg><span class="w-[22px] pl-[3px] text-[9px]">mm</span></div>
                <div class="h-[23px] flex items-center pl-[6px]"><input id="cone-on" type="checkbox" checked class="w-[11px] h-[11px] accent-[#1890ff]"/><label for="cone-on" class="w-[30px] pl-1 text-[#1a85f5] font-bold whitespace-nowrap">顶锥角</label><input aria-label="顶锥角" value="118" class="flex-1 min-w-0 h-[17px] border-b border-[#eee] text-[9px] text-center"/><svg class="w-[6px] h-4 mx-[3px]"><use href="#spin"/></svg><span class="w-[9px] pl-[2px] text-[9px]">°</span></div>
                <div class="h-[18px] flex items-center justify-between font-bold text-[#333]">终止条件<svg class="w-2 h-2"><use href="#chev-up"/></svg></div>
                <div class="h-[23px] flex items-center pl-px"><label for="end" class="w-9">终止深度</label><span class="relative flex-1"><select id="end" class="appearance-none w-full h-[17px] pr-2 border-b border-[#eee] [text-align-last:center]"><option>给定深度</option></select><svg class="absolute right-[6px] top-1 w-2 h-2"><use href="#chev-thin"/></svg></span></div>
                <div class="h-[23px] flex items-center pl-px"><label for="deep" class="w-9">终止深度</label><input id="deep" value="20" class="flex-1 min-w-0 h-[17px] border-b border-[#eee] text-[9px] text-center"/><svg class="w-[6px] h-4 mx-[3px]"><use href="#spin"/></svg><span class="w-[22px] pl-[3px] text-[9px]">mm</span></div>
                <div class="mt-[6px] pl-[5px] flex gap-1">
                    <button type="button" class="w-5 h-5 bg-[#a2a2a2] rounded-[2px] flex items-center justify-center" aria-label="肩部深度"><svg class="w-4 h-4"><use href="#depth"/></svg></button>
                    <button type="button" class="w-5 h-5 bg-[#efefef] rounded-[2px] flex items-center justify-center" aria-label="尖端深度"><svg class="w-4 h-4"><use href="#depth"/></svg></button>
                </div>
                <div class="mt-3 flex justify-end pr-2 gap-[18px]">
                    <button type="button" class="w-[38px] h-5 rounded-[2px] bg-[#0878d4] text-white font-bold">确定</button>
                    <button type="button">关闭</button>
                </div>
            </form>
        </section>

        <!-- Right rail -->
        <aside class="w-[22px] shrink-0 bg-[#dfe4ed] flex flex-col items-center pt-2 gap-[15px]">
            <button><svg class="w-4 h-4" viewBox="0 0 20 20"><path d="M2 3h6l2 3h8v11H2z" fill="none" stroke="#444" stroke-width="1.500"/></svg></button>
            <button><svg class="w-4 h-4" viewBox="0 0 20 20"><circle cx="10" cy="10" r="9" fill="#333"/><path d="M8 15V5.500h3c3.500 0 3.500 5 0 5H8" fill="none" stroke="#fff" stroke-width="1.800"/></svg></button>
            <button><svg class="w-4 h-4" viewBox="0 0 20 20"><path d="M10 1l8.500 5v8L10 19l-8.500-5V6zM1.500 6l17 8M18.500 6l-17 8M10 1v18" fill="none" stroke="#444" stroke-width="1.400"/><path d="M10 6.500l3.500 2v3.500L10 14l-3.500-2V8.500z" fill="#dfe4ed" stroke="#333" stroke-width="1.500"/></svg></button>
            <button><svg class="w-4 h-4" viewBox="0 0 20 20"><path d="M2 18c-1.500-1.500-.5-3 0-3.500L9.500 8C8.500 4 12 .5 16 2l-3 3 .5 2.500L16 8l3-3c1 4-2.500 7.500-6.500 6.500L5.500 18c-1 1-2.500 1-3.500 0z" fill="#333"/></svg></button>
            <button><svg class="w-4 h-4" viewBox="0 0 20 20"><rect x="1.500" y="1.500" width="17" height="17" rx="2" fill="#fff" stroke="#333" stroke-width="1.500"/><path d="M10 2h8v8h-8zM2 10h8v8H2z" fill="#333"/></svg></button>
            <button><svg class="w-4 h-4" viewBox="0 0 20 20"><path d="M5 1h13v13H5c-1.500 0-1.500 3 0 3h13v2H5c-2 0-3-1-3-3V4c0-2 1-3 3-3z" fill="#333"/><path d="M7 5h8M7 8h8" stroke="#fff" stroke-width="1.500"/></svg></button>
        </aside>
    </main>

    <footer class="h-[21px] shrink-0 flex justify-between items-start bg-white text-[#333]">
        <a href="#" class="ml-[2px] w-28 h-[18px] border-b-2 border-[#4a90d0] shadow-sm flex items-center pl-[7px] pr-[5px] gap-1 text-[8px]"><svg class="w-[10px] h-2"><use href="#root"/></svg>控制系统<svg class="ml-auto w-[9px] h-[9px]"><use href="#restore"/></svg></a>
        <span class="relative w-[105px] mr-[3px]"><select aria-label="单位" class="appearance-none w-full h-5 pl-[10px] border border-[#eee] text-[#555]"><option>MMGS</option></select><svg class="absolute right-[7px] top-[6px] w-2 h-2"><use href="#chev-thin"/></svg></span>
    </footer>

    <script>
        // Feature tree rows
        const features = [
            ['sketch', '草图1'], ['extrude', '拉伸凸台/基体1'], ['shell', '抽壳1'], ['sketch', '草图2'],
            ['extrude', '拉伸凸台/基体2'], ['sketch', '草图3'], ['extrude', '拉伸凸台/基体3'], ['sketch', '草图4'],
            ['extrude', '拉伸凸台/基体4'], ['pattern', '线性阵列1'], ['sketch', '草图5'], ['extrude', '拉伸凸台/基体5'],
            ['sketch', '草图6'], ['extrude', '拉伸凸台/基体6'], ['sketch', '草图7'], ['extrude', '拉伸凸台/基体7'],
            ['sketch', '草图8'], ['wizard', 'φ9.0-直孔-钻孔大小 ...']
        ];
        document.getElementById('tree').innerHTML = features.map(([icon, name], i) => {
            const last = i === features.length - 1;
            const muted = icon === 'sketch' || last;
            const arrow = icon === 'extrude' ? '<svg class="w-2 h-[10px]"><use href="#chev-right"/></svg>' : '';
            return `<li class="flex-1 flex items-center pl-[10px] whitespace-nowrap ${muted ? 'text-[#aaa]' : 'text-[#444]'} ${last ? 'mr-[3px] outline-1 -outline-offset-1 outline-[#2b7cc0]' : ''}">
                <span class="w-3 text-[#333]">${arrow}</span>
                <svg class="w-[13px] h-[13px] mr-1"><use href="#${icon}"/></svg>${name}</li>`;
        }).join('');

        // Rack teeth, one pitch at a time; the carriage hides the middle ones
        let teeth = '', crest = '';
        for (let i = -10; i < 28; i++) {
            if (i > 6 && i < 13) continue;
            const x = 385 + 25.36 * i, y = 211.7 + 7.21 * i;
            teeth += `<g transform="translate(${x} ${y})" stroke="#444">
                <path d="M-14.600 3.400L0 0l-35 49-10.500 1.500z" fill="#d0d0d0"/>
                <path d="M0 0l10.700 10.600-31 47L-35 49z" fill="#b2b2b2"/>
                <path d="M-46 51l11-2 13 9z" fill="#c4c4c4" stroke="#3a3a3a" stroke-width="1.500"/>
                <path d="M-43 52l8 0 8 5" fill="none" stroke="#444"/></g>`;
            crest += `${i === -10 || i === 13 ? 'M' : 'L'}${x - 14.6} ${y + 3.4}L${x} ${y}L${x + 10.7} ${y + 10.6}`;
        }
        document.getElementById('teeth').innerHTML = teeth + `<path d="${crest}" fill="none" stroke="#7a22cc" stroke-width="2.200"/>`;

        const holes = [[518, 357], [539, 363], [515, 378], [536, 384], [512, 399], [532, 404], [508, 419], [528, 425],
            [631, 389], [652, 395], [628, 410], [648, 416], [624, 431], [645, 436], [620, 452], [641, 457]];
        document.getElementById('holes').innerHTML = holes.map(([x, y]) => `<circle cx="${x}" cy="${y}" r="2.500"/>`).join('');
    </script>
</body>
</html>
